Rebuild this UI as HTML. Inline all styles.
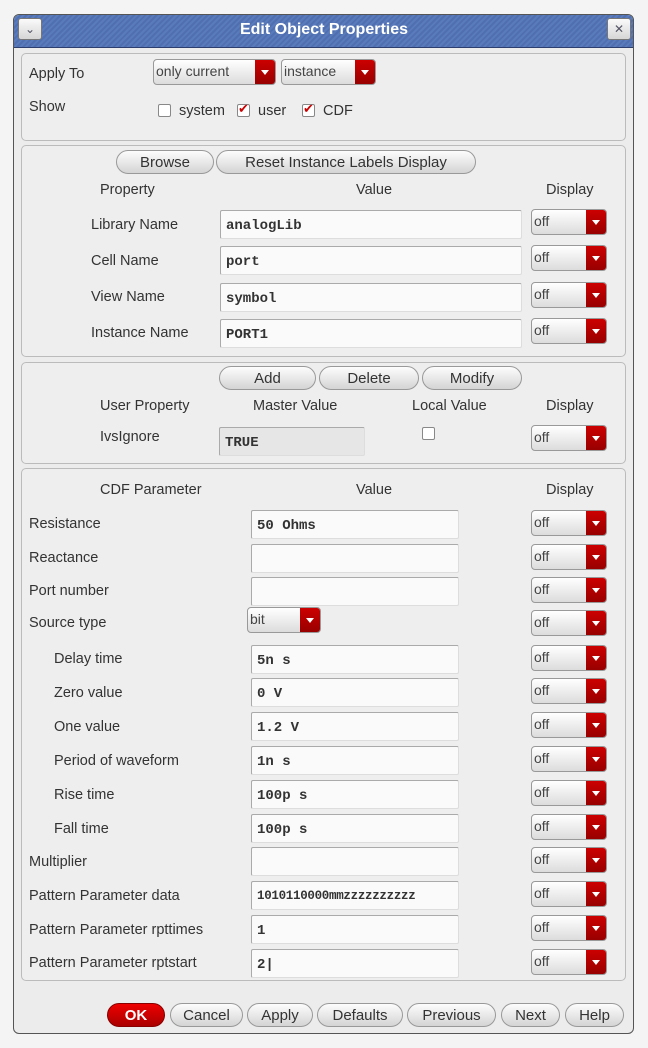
<!DOCTYPE html>
<html><head><meta charset="utf-8"><style>
*{box-sizing:border-box;margin:0;padding:0}
body{width:648px;height:1048px;background:#f4f4f4;position:relative;overflow:hidden;font-family:"Liberation Sans","DejaVu Sans",sans-serif;font-size:14.5px;color:#333}
.a{position:absolute;white-space:nowrap;margin-top:2px}
.win{position:absolute;left:13px;top:14px;width:621px;height:1020px;border:1px solid #555;border-radius:6px;background:#ececec}
.title{position:absolute;left:14px;top:15px;width:619px;height:33px;background:repeating-linear-gradient(135deg,#4f6fb0 0 2px,#5a7bbb 2px 4px);border-bottom:1px solid #2c3f6e;border-radius:5px 5px 0 0}
.tb{position:absolute;top:18px;width:24px;height:22px;background:linear-gradient(#fafafa,#d6d6d6);border:1px solid #777;border-radius:3px;font-size:12px;text-align:center;line-height:20px;color:#556}
.panel{position:absolute;left:21px;width:605px;border:1px solid #bbb;border-radius:5px;background:#eeeeee}
.fld{position:absolute;height:29px;background:#fafafa;border:1px solid #aaa;border-bottom-color:#ddd;border-right-color:#ddd;border-radius:2px;font-family:"Liberation Mono","DejaVu Sans Mono",monospace;font-weight:bold;font-size:14px;padding:7px 0 0 5px;color:#333}
.cb{position:absolute;height:26px;border:1px solid #999;border-radius:4px;background:linear-gradient(#fff,#dcdcdc);font-size:14px;padding:3px 0 0 2px;overflow:hidden;color:#444}
.cb::after{content:"";position:absolute;right:0;top:0;width:20px;height:100%;background:linear-gradient(#c00,#980000)}
.cb::before{content:"";position:absolute;right:6px;top:10px;border:4px solid transparent;border-top:5px solid #fff;z-index:2}
.btn{position:absolute;height:24px;border:1px solid #999;border-radius:12px;background:linear-gradient(#fdfdfd,#d4d4d4);text-align:center;font-size:15px;line-height:24px;color:#333}
.chk{position:absolute;width:13px;height:13px;border:1px solid #888;background:#fff;border-radius:2px}
.chk.on::after{content:"✔";position:absolute;left:0;top:-4px;color:#c00;font-size:13px}
</style></head><body>
<div class="win"></div>
<div class="title"></div>
<div class="tb" style="left:18px">⌄</div>
<div class="tb" style="left:607px">✕</div>
<div class="a" style="left:0;width:648px;text-align:center;top:19px;color:#fff;font-weight:bold;font-size:16px">Edit Object Properties</div>

<div class="panel" style="top:53px;height:88px"></div>
<div class="a" style="left:29px;top:64px">Apply To</div>
<div class="cb" style="left:153px;top:59px;width:123px">only current</div>
<div class="cb" style="left:281px;top:59px;width:95px">instance</div>
<div class="a" style="left:29px;top:97px">Show</div>
<div class="chk" style="left:158px;top:104px"></div><div class="a" style="left:179px;top:101px">system</div>
<div class="chk on" style="left:237px;top:104px"></div><div class="a" style="left:258px;top:101px">user</div>
<div class="chk on" style="left:302px;top:104px"></div><div class="a" style="left:323px;top:101px">CDF</div>

<div class="panel" style="top:145px;height:212px"></div>
<div class="btn" style="left:116px;top:150px;width:98px">Browse</div>
<div class="btn" style="left:216px;top:150px;width:260px">Reset Instance Labels Display</div>
<div class="a" style="left:100px;top:180px">Property</div>
<div class="a" style="left:356px;top:180px">Value</div>
<div class="a" style="left:546px;top:180px">Display</div>
<div class="a" style="left:91px;top:215px">Library Name</div><div class="fld" style="left:220px;top:210px;width:302px">analogLib</div><div class="cb" style="left:531px;top:209px;width:76px">off</div>
<div class="a" style="left:91px;top:251px">Cell Name</div><div class="fld" style="left:220px;top:246px;width:302px">port</div><div class="cb" style="left:531px;top:245px;width:76px">off</div>
<div class="a" style="left:91px;top:287px">View Name</div><div class="fld" style="left:220px;top:283px;width:302px">symbol</div><div class="cb" style="left:531px;top:282px;width:76px">off</div>
<div class="a" style="left:91px;top:323px">Instance Name</div><div class="fld" style="left:220px;top:319px;width:302px">PORT1</div><div class="cb" style="left:531px;top:318px;width:76px">off</div>

<div class="panel" style="top:362px;height:102px"></div>
<div class="btn" style="left:219px;top:366px;width:97px">Add</div>
<div class="btn" style="left:319px;top:366px;width:100px">Delete</div>
<div class="btn" style="left:422px;top:366px;width:100px">Modify</div>
<div class="a" style="left:100px;top:396px">User Property</div>
<div class="a" style="left:253px;top:396px">Master Value</div>
<div class="a" style="left:412px;top:396px">Local Value</div>
<div class="a" style="left:546px;top:396px">Display</div>
<div class="a" style="left:100px;top:427px">IvsIgnore</div>
<div class="fld" style="left:219px;top:427px;width:146px;background:#e6e6e6">TRUE</div>
<div class="chk" style="left:422px;top:427px"></div>
<div class="cb" style="left:531px;top:425px;width:76px">off</div>

<div class="panel" style="top:468px;height:513px"></div>
<div class="a" style="left:100px;top:480px">CDF Parameter</div>
<div class="a" style="left:356px;top:480px">Value</div>
<div class="a" style="left:546px;top:480px">Display</div>

<div class="a" style="left:29px;top:514px">Resistance</div><div class="fld" style="left:251px;top:510px;width:208px">50 Ohms</div><div class="cb" style="left:531px;top:510px;width:76px">off</div>
<div class="a" style="left:29px;top:548px">Reactance</div><div class="fld" style="left:251px;top:544px;width:208px"></div><div class="cb" style="left:531px;top:544px;width:76px">off</div>
<div class="a" style="left:29px;top:581px">Port number</div><div class="fld" style="left:251px;top:577px;width:208px"></div><div class="cb" style="left:531px;top:577px;width:76px">off</div>
<div class="a" style="left:29px;top:613px">Source type</div><div class="cb" style="left:247px;top:607px;width:74px">bit</div><div class="cb" style="left:531px;top:610px;width:76px">off</div>
<div class="a" style="left:54px;top:649px">Delay time</div><div class="fld" style="left:251px;top:645px;width:208px">5n s</div><div class="cb" style="left:531px;top:645px;width:76px">off</div>
<div class="a" style="left:54px;top:683px">Zero value</div><div class="fld" style="left:251px;top:678px;width:208px">0 V</div><div class="cb" style="left:531px;top:678px;width:76px">off</div>
<div class="a" style="left:54px;top:717px">One value</div><div class="fld" style="left:251px;top:712px;width:208px">1.2 V</div><div class="cb" style="left:531px;top:712px;width:76px">off</div>
<div class="a" style="left:54px;top:751px">Period of waveform</div><div class="fld" style="left:251px;top:746px;width:208px">1n s</div><div class="cb" style="left:531px;top:746px;width:76px">off</div>
<div class="a" style="left:54px;top:785px">Rise time</div><div class="fld" style="left:251px;top:780px;width:208px">100p s</div><div class="cb" style="left:531px;top:780px;width:76px">off</div>
<div class="a" style="left:54px;top:819px">Fall time</div><div class="fld" style="left:251px;top:814px;width:208px">100p s</div><div class="cb" style="left:531px;top:814px;width:76px">off</div>
<div class="a" style="left:29px;top:852px">Multiplier</div><div class="fld" style="left:251px;top:847px;width:208px"></div><div class="cb" style="left:531px;top:847px;width:76px">off</div>
<div class="a" style="left:29px;top:886px">Pattern Parameter data</div><div class="fld" style="left:251px;top:881px;width:208px;font-size:12.5px;letter-spacing:-0.3px">1010110000mmzzzzzzzzzz</div><div class="cb" style="left:531px;top:881px;width:76px">off</div>
<div class="a" style="left:29px;top:920px">Pattern Parameter rpttimes</div><div class="fld" style="left:251px;top:915px;width:208px">1</div><div class="cb" style="left:531px;top:915px;width:76px">off</div>
<div class="a" style="left:29px;top:953px">Pattern Parameter rptstart</div><div class="fld" style="left:251px;top:949px;width:208px">2|</div><div class="cb" style="left:531px;top:949px;width:76px">off</div>

<div class="btn" style="left:107px;top:1003px;width:58px;background:linear-gradient(#e00,#a00);color:#fff;font-weight:bold;border-color:#800">OK</div>
<div class="btn" style="left:170px;top:1003px;width:73px">Cancel</div>
<div class="btn" style="left:247px;top:1003px;width:66px">Apply</div>
<div class="btn" style="left:317px;top:1003px;width:86px">Defaults</div>
<div class="btn" style="left:407px;top:1003px;width:89px">Previous</div>
<div class="btn" style="left:501px;top:1003px;width:59px">Next</div>
<div class="btn" style="left:565px;top:1003px;width:59px">Help</div>
</body></html>
